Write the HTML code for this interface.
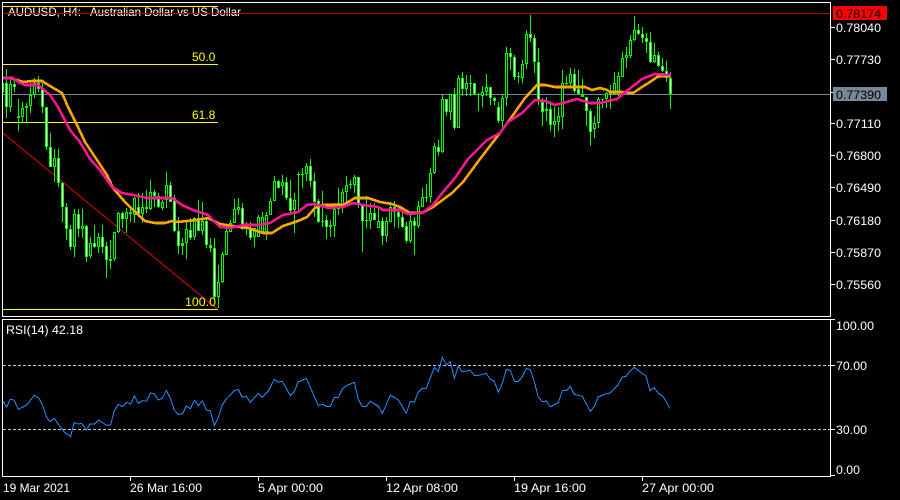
<!DOCTYPE html>
<html lang="en">
<head>
<meta charset="utf-8">
<title>AUDUSD H4</title>
<style>
html,body{margin:0;padding:0;background:#000;width:900px;height:500px;overflow:hidden}
svg{display:block;position:absolute;left:0;top:0}
text{font-family:"Liberation Sans",sans-serif;font-size:12px;fill:#fff}
</style>
</head>
<body>
<svg width="900" height="500" viewBox="0 0 900 500" xmlns="http://www.w3.org/2000/svg">
<rect width="900" height="500" fill="#000"/>

<text x="8" y="16" textLength="73" lengthAdjust="spacingAndGlyphs">AUDUSD, H4:</text>
<text x="90" y="16" textLength="151" lengthAdjust="spacingAndGlyphs">Australian Dollar vs US Dollar</text>

<g shape-rendering="crispEdges" fill="none">
<path d="M3 94.5H830" stroke="#778899"/>
<path d="M3 6.5H218M3 64.5H218M3 122.5H218M3 309.5H218" stroke="#ffff00"/>
<path d="M3 13.5H830" stroke="#c00000"/>
<path d="M3 133L217 309" stroke="#e60000"/>

<g transform="translate(.5 0)">
<!-- wicks -->
<path stroke="#00ff00" d="M3 83V92M6 69V118M10 76V112M14 78V92M18 99V131M22 102V123M26 103V123M30 83V113M34 78V98M38 76V92M42 83V113M46 107V150M50 133V167M54 149V182M58 149V187M62 182V222M66 203V240M70 225V250M74 209V257M78 209V237M82 209V238M86 225V262M90 237V258M94 225V248M98 233V253M102 225V253M106 242V278M110 240V269M114 232V261M118 212V233M122 212V228M126 208V233M130 206V222M134 197V223M138 193V217M142 193V223M146 190V213M150 180V210M154 190V207M158 193V208M162 200V210M166 172V208M170 182V202M174 195V232M178 217V254M182 238V255M186 220V259M190 218V240M194 217V240M198 200V231M202 202V235M206 217V248M210 238V252M214 238V300M218 265V308M222 252V283M226 228V255M230 220V232M234 199V223M238 198V215M242 203V230M246 222V235M250 222V240M254 228V247M258 215V237M262 212V232M266 212V240M270 198V215M274 176V201M278 180V188M282 175V195M286 177V200M290 180V213M294 193V233M298 172V210M302 168V188M306 163V181M310 159V187M314 173V217M318 199V223M322 191V227M326 215V239M330 220V237M334 203V237M338 188V215M342 189V213M346 176V202M350 180V189M354 175V193M358 177V208M362 205V252M366 196V228M370 203V229M374 203V220M378 208V228M382 217V245M386 217V242M390 202V222M394 201V227M398 208V228M402 210V228M406 222V243M410 215V243M414 217V255M418 201V228M422 188V207M426 184V202M430 168V203M434 143V174M438 140V156M442 95V153M446 99V116M450 94V120M454 88V130M458 75V128M462 72V96M466 75V96M470 75V96M474 83V95M478 93V111M482 86V107M486 74V96M490 87V105M494 97V105M498 102V123M502 95V130M506 47V106M510 48V70M514 55V80M518 72V83M522 60V83M526 30V69M530 15V42M534 35V73M538 48V105M542 98V126M546 97V121M550 101V131M554 107V137M558 107V131M562 70V129M566 76V85M570 68V87M574 69V93M578 70V95M582 79V97M586 97V126M590 109V146M594 116V138M598 97V128M602 99V108M606 92V108M610 85V109M614 72V95M618 72V96M622 52V77M626 47V68M630 35V58M634 16V41M638 24V35M642 27V43M646 33V53M650 32V63M654 43V63M658 52V67M662 58V72M666 61V82M670 72V109"/>
<!-- bodies -->
<path stroke="#00ff00" stroke-width="3" d="M6 83V107M10 84V107M14 84V87M18 116V118M22 108V117M26 106V108M30 95V106M34 83V95M38 83V89M42 89V107M46 107V147M50 147V167M54 158V167M58 158V183M62 183V207M66 207V229M70 229V247M74 214V247M78 214V229M82 226V229M86 226V257M90 243V256M94 243V247M98 237V247M102 237V247M106 246V260M110 259V261M114 232V259M118 213V232M122 213V219M126 212V219M130 212V214M134 198V215M138 207V214M142 207V214M146 207V209M150 192V209M154 192V196M158 196V207M162 202V208M166 185V200M170 185V202M174 198V231M178 231V246M182 243V246M186 229V243M190 230V238M194 218V237M198 218V231M202 221V231M206 221V245M210 245V248M214 248V297M218 282V297M222 254V282M226 231V255M230 223V232M234 209V223M238 207V210M242 208V229M246 226V229M250 229V238M254 228V237M258 217V237M262 217V232M266 215V232M270 201V215M274 181V201M278 181V188M282 182V186M286 182V198M290 198V211M294 200V210M298 174V175M302 174V175M306 166V174M310 166V181M314 181V202M318 201V222M322 221V222M326 220V227M330 225V227M334 209V226M338 203V209M342 192V208M346 185V192M350 184V185M354 177V185M358 177V205M362 204V221M366 220V221M370 213V221M374 213V220M378 221V228M382 221V236M386 221V236M390 207V222M394 207V212M398 212V217M402 217V227M406 226V241M410 221V241M414 221V226M418 206V226M422 197V207M426 197V198M430 173V197M434 146V173M438 147V152M442 99V152M446 99V112M450 94V112M454 94V128M458 78V128M462 78V89M466 83V89M470 83V84M474 83V94M478 94V95M482 92V96M486 87V92M490 87V98M494 98V101M498 107V121M502 98V121M506 53V98M510 53V57M514 57V77M518 76V77M522 64V78M526 34V64M530 34V38M534 38V62M538 62V100M542 102V112M546 109V111M550 109V125M554 121V125M558 116V122M562 83V117M566 83V84M570 74V83M574 74V91M578 89V94M582 94V97M586 97V111M590 111V132M594 123V129M598 99V123M602 99V100M606 93V99M610 92V94M614 83V94M618 76V95M622 58V77M626 55V58M630 40V56M634 30V40M638 30V34M642 34V38M646 38V42M650 42V62M654 55V62M658 55V66M662 66V71M666 71V78M670 78V94"/>
<!-- bearish inner -->
<path stroke="#ffffff" d="M6 84V106M14 85V86M38 84V88M42 90V106M46 108V146M50 148V166M58 159V182M62 184V206M66 208V228M70 230V246M78 215V228M86 227V256M94 244V246M102 238V246M106 247V259M122 214V218M138 208V213M154 193V195M158 197V206M170 186V201M174 199V230M178 232V245M190 231V237M198 219V230M206 222V244M214 249V296M242 209V228M250 230V237M278 182V187M286 183V197M290 199V210M310 167V180M314 182V201M318 202V221M326 221V226M358 178V204M362 205V220M374 214V219M382 222V235M394 208V211M398 213V216M402 218V226M406 227V240M414 222V225M438 148V151M446 100V111M454 95V127M462 79V88M474 84V93M490 88V97M494 99V100M498 108V120M510 54V56M514 58V76M530 35V37M534 39V61M538 63V99M542 103V111M550 110V124M574 75V90M578 90V93M586 98V110M590 112V131M638 31V33M642 35V37M646 39V41M650 43V61M658 56V65M662 67V70M666 72V77M670 79V93"/>
<!-- bullish inner -->
<path stroke="#000000" d="M10 85V106M22 109V116M26 107V107M30 96V105M34 84V94M54 159V166M74 215V246M82 227V228M90 244V255M98 238V246M114 233V258M118 214V231M126 213V218M134 199V214M142 208V213M150 193V208M162 203V207M166 186V199M186 230V242M194 219V236M202 222V230M218 283V296M222 255V281M226 232V254M230 224V231M234 210V222M238 208V209M254 229V236M258 218V236M262 218V231M266 216V231M270 202V214M274 182V200M282 183V185M294 201V209M306 167V173M334 210V225M338 204V208M342 193V207M346 186V191M354 178V184M370 214V220M378 222V227M386 222V235M390 208V221M410 222V240M418 207V225M422 198V206M430 174V196M434 147V172M442 100V151M450 95V111M458 79V127M466 84V88M482 93V95M486 88V91M502 99V120M506 54V97M522 65V77M526 35V63M554 122V124M558 117V121M562 84V116M570 75V82M594 124V128M598 100V122M606 94V98M614 84V93M618 77V94M622 59V76M626 56V57M630 41V55M634 31V39M654 56V61"/>
</g>

<!-- moving averages -->
<polyline stroke="#ffa500" stroke-width="2.6" points="3,78 10,78 17,80 23,82 32,81 42,81 50,86 62,93 68,107 77,125 85,142 97,160 107,175 113,188 125,202 133,210 145,221 155,223 165,223 172,221 178,222 197,220 208,218 220,224 233,226 248,228 263,233 272,233 283,226 298,221 307,217 315,208 323,205 343,205 355,198 368,198 380,202 392,204 400,207 410,213 422,213 433,207 452,193 463,182 480,159 500,133 513,115 525,98 537,85 545,85 555,87 585,87 592,90 600,88 607,90 610,92 622,92 633,93 642,87 650,82 657,77 662,76 671,76"/>
<polyline stroke="#ff1493" stroke-width="2.6" points="3,78 13,78 20,83 25,85 38,85 50,95 58,107 70,130 80,142 90,159 100,170 112,187 122,193 133,195 147,198 172,198 182,205 193,210 208,215 220,227 230,228 243,225 258,225 270,223 283,215 298,212 307,205 315,204 323,206 328,208 343,207 353,203 363,205 378,207 383,210 400,210 408,214 422,213 433,205 443,192 455,178 468,159 487,140 500,133 508,122 522,113 535,100 545,101 555,105 567,102 577,99 590,103 600,103 617,99 628,90 642,79 655,74 671,75"/>

<!-- RSI levels -->
<path d="M3 365.5H830M3 429.5H830" stroke="#c8c8c8" stroke-dasharray="3 2"/>

<!-- RSI -->
<g transform="translate(0 320) scale(.33333)">
<polyline stroke="#1e90ff" stroke-width="3" points="9,243 20,262 30,238 42,240 55,268 80,255 103,226 118,236 130,262 140,292 150,305 163,295 180,320 195,338 212,350 222,308 235,312 245,310 259,330 270,312 283,312 296,300 320,316 332,315 342,275 355,253 367,260 380,247 392,253 403,228 415,250 428,242 440,243 452,219 463,222 475,240 487,235 499,211 511,235 523,270 535,283 547,282 559,258 571,266 583,241 595,257 607,243 619,270 631,273 643,317 655,292 667,255 679,237 703,212 715,208 727,232 739,229 751,247 775,220 787,232 805,213 823,178 835,187 847,184 871,227 883,215 895,185 900,184 919,175 930,200 955,257 967,253 979,259 991,259 1003,232 1015,232 1027,207 1039,197 1063,187 1075,238 1087,260 1099,259 1111,244 1123,252 1135,258 1147,280 1171,226 1183,232 1195,240 1219,280 1231,244 1243,247 1255,216 1267,205 1279,205 1303,142 1315,155 1327,112 1339,135 1351,125 1363,175 1375,138 1387,155 1411,151 1423,166 1435,166 1459,160 1471,178 1483,184 1495,217 1507,190 1519,148 1531,151 1543,184 1555,184 1567,170 1579,145 1591,149 1603,185 1615,232 1627,245 1639,243 1651,260 1675,248 1687,212 1699,212 1711,199 1723,223 1747,229 1771,274 1783,260 1795,230 1800,229 1812,223 1830,219 1854,195 1866,172 1878,169 1891,152 1903,142 1915,152 1927,160 1938,168 1950,212 1962,203 1978,223 1987,227 1999,245 2009,265"/>
</g>

<!-- frames -->
<path stroke="#ffffff" d="M2.5 2.5H830.5V316.5H2.5ZM2.5 319.5H830.5V476.5H2.5Z"/>
<!-- price ticks -->
<path stroke="#ffffff" d="M831 27.5H835M831 59.5H835M831 92.5H835M831 123.5H835M831 155.5H835M831 187.5H835M831 220.5H835M831 252.5H835M831 284.5H835M831 319.5H835M831 365.5H835M831 429.5H835M831 475.5H835"/>
<!-- time ticks -->
<path stroke="#ffffff" d="M130.5 477V481M258.5 477V481M386.5 477V481M514.5 477V481M642.5 477V481"/>

<rect x="833" y="6" width="54" height="14" fill="#ff0000"/>
<rect x="833" y="87" width="54" height="14" fill="#778899"/>
</g>

<!-- fib labels -->
<text x="192" y="61" style="fill:#ffff00">50.0</text>
<text x="192" y="119" style="fill:#ffff00">61.8</text>
<text x="185" y="306" textLength="31" lengthAdjust="spacingAndGlyphs" style="fill:#ffff00">100.0</text>

<!-- price labels -->
<text x="836" y="18" textLength="45" lengthAdjust="spacingAndGlyphs" style="fill:#000">0.78174</text>
<text x="836" y="32" textLength="45" lengthAdjust="spacingAndGlyphs">0.78040</text>
<text x="836" y="64" textLength="45" lengthAdjust="spacingAndGlyphs">0.77730</text>
<text x="836" y="99" textLength="45" lengthAdjust="spacingAndGlyphs" style="fill:#000">0.77390</text>
<text x="836" y="128" textLength="45" lengthAdjust="spacingAndGlyphs">0.77110</text>
<text x="836" y="160" textLength="45" lengthAdjust="spacingAndGlyphs">0.76800</text>
<text x="836" y="192" textLength="45" lengthAdjust="spacingAndGlyphs">0.76490</text>
<text x="836" y="225" textLength="45" lengthAdjust="spacingAndGlyphs">0.76180</text>
<text x="836" y="257" textLength="45" lengthAdjust="spacingAndGlyphs">0.75870</text>
<text x="836" y="289" textLength="45" lengthAdjust="spacingAndGlyphs">0.75560</text>

<!-- RSI labels -->
<text x="6" y="334" textLength="77" lengthAdjust="spacingAndGlyphs">RSI(14) 42.18</text>
<text x="836" y="330" textLength="38" lengthAdjust="spacingAndGlyphs">100.00</text>
<text x="836" y="370" textLength="31" lengthAdjust="spacingAndGlyphs">70.00</text>
<text x="836" y="434" textLength="31" lengthAdjust="spacingAndGlyphs">30.00</text>
<text x="836" y="474" textLength="24" lengthAdjust="spacingAndGlyphs">0.00</text>

<!-- time labels -->
<text x="3" y="492" textLength="67" lengthAdjust="spacingAndGlyphs">19 Mar 2021</text>
<text x="130" y="492" textLength="72" lengthAdjust="spacingAndGlyphs">26 Mar 16:00</text>
<text x="258" y="492" textLength="65" lengthAdjust="spacingAndGlyphs">5 Apr 00:00</text>
<text x="386" y="492" textLength="72" lengthAdjust="spacingAndGlyphs">12 Apr 08:00</text>
<text x="514" y="492" textLength="72" lengthAdjust="spacingAndGlyphs">19 Apr 16:00</text>
<text x="642" y="492" textLength="72" lengthAdjust="spacingAndGlyphs">27 Apr 00:00</text>
</svg>
</body>
</html>
